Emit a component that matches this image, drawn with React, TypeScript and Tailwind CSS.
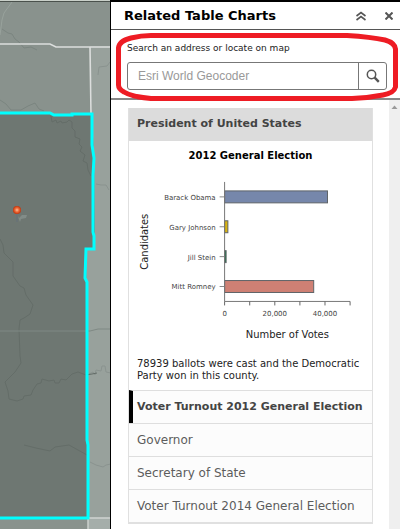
import { ReactNode } from "react";

const candidates = [
  { name: "Barack Obama", votes: 41000, color: "#7687ab" },
  { name: "Gary Johnson", votes: 1300, color: "#d9b310" },
  { name: "Jill Stein", votes: 600, color: "#1f7a4a" },
  { name: "Mitt Romney", votes: 35500, color: "#cf8074" },
];

const ticks = [0, 10000, 20000, 30000, 40000, 50000];

const AXIS_X = 96;
const AXIS_BOTTOM = 134;
const PLOT_WIDTH = 126;

function scale(votes: number) {
  return (votes / 50000) * PLOT_WIDTH;
}

function CountyMap() {
  return (
    <svg
      className="absolute inset-0 h-full w-full"
      viewBox="0 0 110 529"
      preserveAspectRatio="xMinYMin slice"
      role="img"
      aria-label="County map"
    >
      <defs>
        <radialGradient id="pin">
          <stop offset="0" stopColor="#ffc09a" />
          <stop offset="0.5" stopColor="#ee6a38" />
          <stop offset="1" stopColor="#c2350c" />
        </radialGradient>
      </defs>
      <rect width="110" height="529" fill="#89928d" />
      <path d="M90 46H110V529H88V518L86 249H95L92 114Z" fill="#98a19c" />
      <path d="M0 518H110V529H0Z" fill="#89928d" />
      <path d="M88 518H110V529H88Z" fill="#a5aeaa" />
      <path d="M0 114L50 113L60 115L92 114L94 160L95 249H86L88 518H0Z" fill="#6e7772" />

      <g fill="none" stroke="#7b8580" strokeWidth="1">
        <path d="M2 29l6 4 4 1 3 5 4 3 5 6 7-1 6 3" />
        <path d="M0 100l6 4 5 6 10 0 7-4 7-3 4 6 5 2" />
      </g>
      <g fill="none" stroke="#8a938f" strokeWidth="1">
        <path d="M110 62l-3 4-8 1-1 8" />
        <path d="M96 184l5 1 5 0 3 5" />
        <path d="M89 374l4-2 2 3 1-5 5 1 1-5h3l1 6 5 1" />
        <path d="M90 462l6 3 7 2 3-2 5-1" />
      </g>
      <g fill="none" stroke="#646d68" strokeWidth="1">
        <path d="M51 116l1 6 4-2 1 3 4-2 1 2 5-1 2-2 3 2v6l3 3v6l5 2-1 5 3 3-2 4 5 4-2 6 4 2 1 7 3 6" />
        <path d="M0 239l3 6 1 8 9 9v14l7 10 4 2 2 7 7 10-3 9-6 4-4 2-1 9 1 27 1 7-6 9-10 10 3 9 1 8 8 2 6-2 1-3 7-1 2-5 4-6 4-1 1-4 7 2 5-1 1 3 4 0 2-4 5 1 6-6 6-2 8 3 6-1 5-1" />
        <path d="M24 445l12 3 14 3 5-4 14-2 9 5 9 5" />
      </g>
      <path d="M12 2L4 13 2 20 0 35" fill="none" stroke="#98a29c" />
      <path d="M0 331H90L98 329H110" fill="none" stroke="#7f8984" />
      <path d="M0 44H50L56 47H110M90 47L91 114" fill="none" stroke="#dcdedd" strokeWidth="1.6" />
      <path d="M88 518H110M88 518V529" fill="none" stroke="#cfd4d1" strokeWidth="1.4" />
      <path
        d="M0 113H50L54 115H72V114H92V145L94 158L93 175V232L94 236V249H86L85 278L87 282V440L88 445V518H0"
        fill="none"
        stroke="#00ffff"
        strokeWidth="3"
      />
      <path d="M17 214L20 222 21 219 26 218 27 215 22 215 19 218Z" fill="#828c88" />
      <path d="M17 213V222" stroke="#65717a" />
      <circle cx="17" cy="210" r="4" fill="url(#pin)" />
      <path d="M0 0.5H110" stroke="#c9d0c9" />
      <path d="M0 1.5H110" stroke="#4a514c" />
    </svg>
  );
}

function VotesChart() {
  return (
    <svg
      className="block w-full"
      viewBox="0 0 244 178"
      role="img"
      aria-label="Number of votes by candidate"
      fontFamily='Verdana, "DejaVu Sans", sans-serif'
    >
      {candidates.map((c, i) => (
        <g key={c.name}>
          <rect
            x={AXIS_X}
            y={23 + i * 30}
            width={scale(c.votes)}
            height="12"
            fill={c.color}
            stroke="#5f6468"
          />
          <path d={`M${AXIS_X - 5} ${29 + i * 30}H${AXIS_X}`} stroke="#888" />
          <text x="87" y={32 + i * 30} fontSize="7" textAnchor="end" fill="#444">
            {c.name}
          </text>
        </g>
      ))}
      <path
        d={`M${AXIS_X} 14V${AXIS_BOTTOM}H${AXIS_X + PLOT_WIDTH}`}
        fill="none"
        stroke="#777"
      />
      {ticks.map((t, i) => (
        <g key={t}>
          <path
            d={`M${AXIS_X + scale(t)} ${AXIS_BOTTOM}v4`}
            stroke="#666"
          />
          {i % 2 === 0 && (
            <text
              x={AXIS_X + scale(t)}
              y="149"
              fontSize="7"
              textAnchor="middle"
              fill="#444"
            >
              {t.toLocaleString("en-US")}
            </text>
          )}
        </g>
      ))}
      <text x="159" y="171" fontSize="10" textAnchor="middle" fill="#222">
        Number of Votes
      </text>
      <text
        transform="translate(19 74) rotate(-90)"
        fontSize="10"
        textAnchor="middle"
        fill="#222"
      >
        Candidates
      </text>
    </svg>
  );
}

function Section({ active, children }: { active?: boolean; children: ReactNode }) {
  return (
    <button
      type="button"
      className={
        active
          ? "block h-[33px] w-full border-t border-l-4 border-t-[#dedede] border-l-black pl-1 text-left text-[11px] font-bold whitespace-nowrap text-[#444]"
          : "block h-[33px] w-full border-t border-[#dedede] pl-2 text-left text-[12px] whitespace-nowrap text-[#5c5c5c]"
      }
    >
      {children}
    </button>
  );
}

export default function App() {
  return (
    <div className="flex min-h-screen bg-white font-[Verdana,'DejaVu_Sans',sans-serif]">
      <div className="relative w-[110px] shrink-0 overflow-hidden">
        <CountyMap />
      </div>

      <aside className="flex min-w-0 flex-1 flex-col border-t-2 border-l border-black">
        <header className="flex h-7 items-center border-b border-[#555] pr-[3px] pl-[13px]">
          <h1 className="flex-1 text-[13px] font-bold whitespace-nowrap text-black">
            Related Table Charts
          </h1>
          <button type="button" aria-label="Collapse" className="mr-[11px] p-1">
            <svg width="10" height="10" viewBox="0 0 10 10" fill="none" stroke="#555" strokeWidth="1.6">
              <path d="M0.5 5L5 1.5L9.5 5M0.5 9L5 5.5L9.5 9" />
            </svg>
          </button>
          <button type="button" aria-label="Close" className="p-1">
            <svg width="8" height="8" viewBox="0 0 8 8" stroke="#555" strokeWidth="2">
              <path d="M0.5 0.5L7.5 7.5M7.5 0.5L0.5 7.5" />
            </svg>
          </button>
        </header>

        <div className="relative border-b-2 border-[#888] pt-3 pr-[13px] pb-2 pl-4">
          <label htmlFor="address" className="block text-[9px] leading-3 text-[#222]">
            Search an address or locate on map
          </label>
          <div className="mt-2 flex h-7 rounded-[3px] border border-[#777]">
            <input
              id="address"
              type="text"
              placeholder="Esri World Geocoder"
              className="min-w-0 flex-1 px-[10px] font-['Liberation_Sans',sans-serif] text-[12px] outline-none placeholder:text-[#999]"
            />
            <button
              type="button"
              aria-label="Search"
              className="flex w-7 items-center justify-center border-l border-[#777]"
            >
              <svg width="14" height="14" viewBox="0 0 14 14" fill="none" stroke="#555">
                <circle cx="5.5" cy="5.5" r="4.2" strokeWidth="1.5" />
                <path d="M8.7 8.7L12.8 12.8" strokeWidth="2.4" />
              </svg>
            </button>
          </div>
          <svg
            className="pointer-events-none absolute top-[3px] left-1 h-[68px] w-[calc(100%-6px)]"
            viewBox="0 0 283 68"
            preserveAspectRatio="none"
            fill="none"
            stroke="#ee1c24"
            strokeWidth="5"
          >
            <path d="M36 2.5H232Q256 4 270 7Q280 10 280.5 16V54Q279 60 268 62Q253 65 237 65.5H36Q17 64 9 59Q3.5 56 3.5 52V15Q4 8 16 5Q26 2.5 36 2.5Z" />
          </svg>
        </div>

        <div className="flex flex-1">
          <main className="min-w-0 flex-1 pt-2 pr-4 pb-1 pl-[17px]">
            <div className="border-x border-b-2 border-[#e0e0e0] bg-[#fcfcfc]">
              <h2 className="flex h-[33px] items-center bg-[#dcdcdc] pl-2 text-[11px] font-bold text-[#444]">
                President of United States
              </h2>
              <div className="bg-white">
                <h3 className="pt-[7px] pb-1 text-center text-[10px] leading-4 font-bold text-black">
                  2012 General Election
                </h3>
                <VotesChart />
                <p className="px-2 pt-[13px] pb-2 text-[10px] leading-3 text-[#222]">
                  78939 ballots were cast and the Democratic Party won in this county.
                </p>
              </div>
              <Section active>Voter Turnout 2012 General Election</Section>
              <Section>Governor</Section>
              <Section>Secretary of State</Section>
              <Section>Voter Turnout 2014 General Election</Section>
            </div>
          </main>
          <div className="flex w-[11px] shrink-0 justify-center bg-[#efefef] pt-1">
            <svg width="7" height="6" viewBox="0 0 7 6" fill="#999">
              <path d="M0.5 5L3.5 1.5L6.5 5Z" />
            </svg>
          </div>
        </div>
      </aside>
    </div>
  );
}
